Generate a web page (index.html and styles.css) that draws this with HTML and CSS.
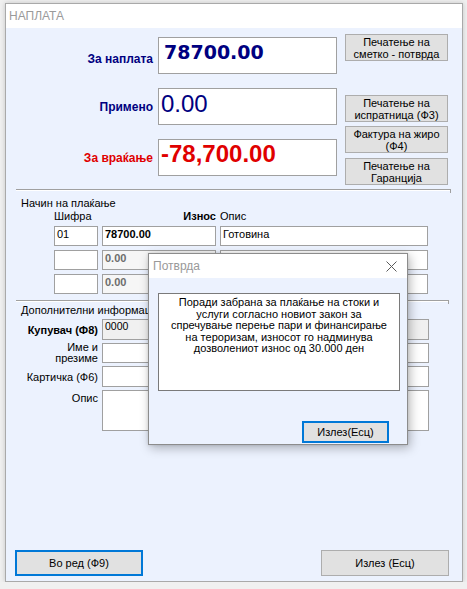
FILE: index.html
```html
<!DOCTYPE html>
<html lang="mk">
<head>
<meta charset="utf-8">
<title>Наплата</title>
<link rel="stylesheet" href="styles.css">
</head>
<body>
<div class="window">
  <div class="titlebar">НАПЛАТА</div>
  <div class="content">
    <div class="top">
      <div class="amounts">
        <span class="amt-label navy first">За наплата</span>
        <div class="bigbox big-due navy">78700.00</div>
        <span class="amt-label navy">Примено</span>
        <div class="bigbox big-paid navy">0.00</div>
        <span class="amt-label red">За враќање</span>
        <div class="bigbox big-change red">-78,700.00</div>
      </div>
      <div class="side-buttons">
        <button class="btn side b1">Печатење на<br>сметко - потврда</button>
        <button class="btn side b2">Печатење на<br>испратница (Ф3)</button>
        <button class="btn side b3">Фактура на жиро<br>(Ф4)</button>
        <button class="btn side b4">Печатење на<br>Гаранција</button>
      </div>
    </div>

    <div class="group pay">
      <div class="group-title">Начин на плаќање</div>
      <div class="pay-grid">
        <span class="hdr">Шифра</span>
        <span class="hdr hdr-amt">Износ</span>
        <span class="hdr">Опис</span>
      </div>
      <div class="pay-grid rows">
        <div class="tb">01</div>
        <div class="tb bold">78700.00</div>
        <div class="tb">Готовина</div>
        <div class="tb"></div>
        <div class="tb bold dim">0.00</div>
        <div class="tb"></div>
        <div class="tb"></div>
        <div class="tb bold dim">0.00</div>
        <div class="tb"></div>
      </div>
    </div>

    <div class="group extra">
      <div class="group-title">Дополнителни информации</div>
      <div class="extra-grid">
        <span class="lbl bold">Купувач (Ф8)</span>
        <div class="tb ro small">0000</div>
        <span class="lbl two">Име и<br>презиме</span>
        <div class="tb"></div>
        <span class="lbl">Картичка (Ф6)</span>
        <div class="tb"></div>
        <span class="lbl top-lbl">Опис</span>
        <div class="tb"></div>
      </div>
    </div>

    <div class="footer">
      <button class="btn foot default">Во ред (Ф9)</button>
      <button class="btn foot">Излез (Есц)</button>
    </div>
  </div>

  <div class="dialog">
    <div class="dlg-title">
      <span>Потврда</span>
      <svg class="close" width="11" height="11" viewBox="0 0 11 11"><path d="M0.5 0.5 L10.5 10.5 M10.5 0.5 L0.5 10.5" stroke="#5a5a5a" stroke-width="1" fill="none"/></svg>
    </div>
    <div class="dlg-body">
      <div class="msg">Поради забрана за плаќање на стоки и<br>услуги согласно новиот закон за<br>спречување перење пари и финансирање<br>на тероризам, износот го надминува<br>дозволениот износ од 30.000 ден</div>
      <button class="btn default dlg-btn">Излез(Есц)</button>
    </div>
  </div>
</div>
</body>
</html>
```

FILE: styles.css
```css
* { box-sizing: border-box; }

body {
  margin: 0;
  background: #f0f0f0;
  font-family: "Liberation Sans", Arial, sans-serif;
  font-size: 11px;
  color: #000;
}

.window {
  position: relative;
  margin: 3px 0 0 5px;
  width: 458px;
  height: 579px;
  border: 1px solid #a9a9a9;
  background: #fff;
  box-shadow: 0 0 5px rgba(0, 0, 0, 0.18);
  display: flex;
  flex-direction: column;
}

.titlebar {
  height: 24px;
  line-height: 24px;
  padding-left: 3px;
  color: #9a9a9a;
  font-size: 12px;
  background: #fff;
}

.content {
  flex: 1;
  background: #ecf2fe;
  display: flex;
  flex-direction: column;
}

/* top area */
.top {
  height: 161px;
  display: flex;
  align-items: flex-start;
}

.amounts {
  margin-top: 9px;
  display: grid;
  grid-template-columns: 147px 179px;
  grid-auto-rows: 37px;
  column-gap: 5px;
  row-gap: 14px;
  align-items: center;
}

.amt-label {
  text-align: right;
  font-weight: bold;
  font-size: 12px;
  line-height: 14px;
}

.amt-label.first { padding-top: 6px; }

.navy { color: #000080; }
.red { color: #e00000; }

.bigbox {
  height: 37px;
  background: #fff;
  border: 1px solid #a0a0a0;
  white-space: nowrap;
  overflow: hidden;
}

.big-due {
  font-family: "DejaVu Sans", Verdana, sans-serif;
  font-weight: bold;
  font-size: 19px;
  line-height: 22px;
  padding: 3px 0 0 5px;
}

.big-paid {
  font-size: 24px;
  line-height: 28px;
  padding: 1px 0 0 2px;
}

.big-change {
  font-size: 24px;
  font-weight: bold;
  line-height: 28px;
  padding: 0 0 0 2px;
}

.side-buttons {
  margin: 6px 0 0 8px;
  width: 103px;
  display: flex;
  flex-direction: column;
}

.btn {
  background: #e1e1e1;
  border: 1px solid #adadad;
  font-family: "Liberation Sans", Arial, sans-serif;
  font-size: 11px;
  line-height: 12px;
  color: #000;
  padding: 0;
  text-align: center;
}

.btn.default {
  border: 2px solid #0078d7;
}

.side { height: 27px; }
.b2 { margin-top: 34px; }
.b3 { margin-top: 4px; }
.b4 { margin-top: 5px; }

/* groups */
.group {
  position: relative;
  margin-left: 10px;
  border-top: 1px solid #a0a0a0;
  box-shadow: inset 0 1px 0 #ffffff;
}

.group::after {
  content: "";
  position: absolute;
  right: 0;
  top: -1px;
  width: 1px;
  height: 4px;
  background: #a0a0a0;
}

.pay {
  width: 435px;
  height: 111px;
  padding-top: 7px;
}

.extra {
  width: 433px;
  padding-top: 3px;
}

.group-title {
  padding-left: 5px;
  line-height: 13px;
  height: 13px;
  white-space: nowrap;
}

.pay-grid {
  display: grid;
  grid-template-columns: 44px 114px 208px;
  column-gap: 4px;
  padding-left: 38px;
  line-height: 13px;
}

.hdr-amt {
  text-align: right;
  font-weight: bold;
}

.pay-grid.rows {
  margin-top: 3px;
  grid-auto-rows: 20px;
  row-gap: 4px;
}

.tb {
  height: 100%;
  background: #fff;
  border: 1px solid #a0a0a0;
  padding: 1px 0 0 2px;
  line-height: 13px;
  white-space: nowrap;
  overflow: hidden;
}

.bold { font-weight: bold; }

.dim {
  color: #6d6d6d;
  background: #f6f6f6;
}

.ro { background: #f0f0f0; }
.small { font-size: 10.5px; padding-top: 0; line-height: 12px; }

.extra-grid {
  margin-top: 2px;
  display: grid;
  grid-template-columns: 82px 327px;
  grid-template-rows: 21px 20px 21px 41px;
  column-gap: 4px;
  row-gap: 3px;
}

.lbl {
  display: flex;
  align-items: center;
  justify-content: flex-end;
  text-align: right;
  white-space: nowrap;
}

.lbl.two {
  line-height: 11px;
}

.lbl.top-lbl {
  align-items: flex-start;
  padding-top: 2px;
}

/* footer */
.footer {
  margin-top: auto;
  display: flex;
  justify-content: space-between;
  padding: 0 13px 5px 9px;
}

.foot {
  width: 128px;
  height: 26px;
}

/* dialog */
.dialog {
  position: absolute;
  left: 142px;
  top: 249px;
  width: 260px;
  height: 192px;
  border: 1px solid #8c8c8c;
  background: #ecf2fe;
  box-shadow: 2px 3px 10px rgba(0, 0, 0, 0.28), 0 0 3px rgba(0, 0, 0, 0.12);
  display: flex;
  flex-direction: column;
}

.dlg-title {
  height: 24px;
  background: #fff;
  display: flex;
  align-items: center;
  justify-content: space-between;
  padding: 0 10px 0 4px;
  color: #999;
  font-size: 12px;
}

.close { display: block; margin-top: 1px; }

.dlg-body {
  flex: 1;
  display: flex;
  flex-direction: column;
}

.msg {
  margin: 15px 0 0 9px;
  width: 242px;
  height: 98px;
  background: #fff;
  border: 1px solid #7a7a7a;
  text-align: center;
  line-height: 11.5px;
  padding-top: 3px;
  white-space: nowrap;
}

.dlg-btn {
  align-self: flex-end;
  margin: 30px 18px 0 0;
  width: 87px;
  height: 22px;
}
```
